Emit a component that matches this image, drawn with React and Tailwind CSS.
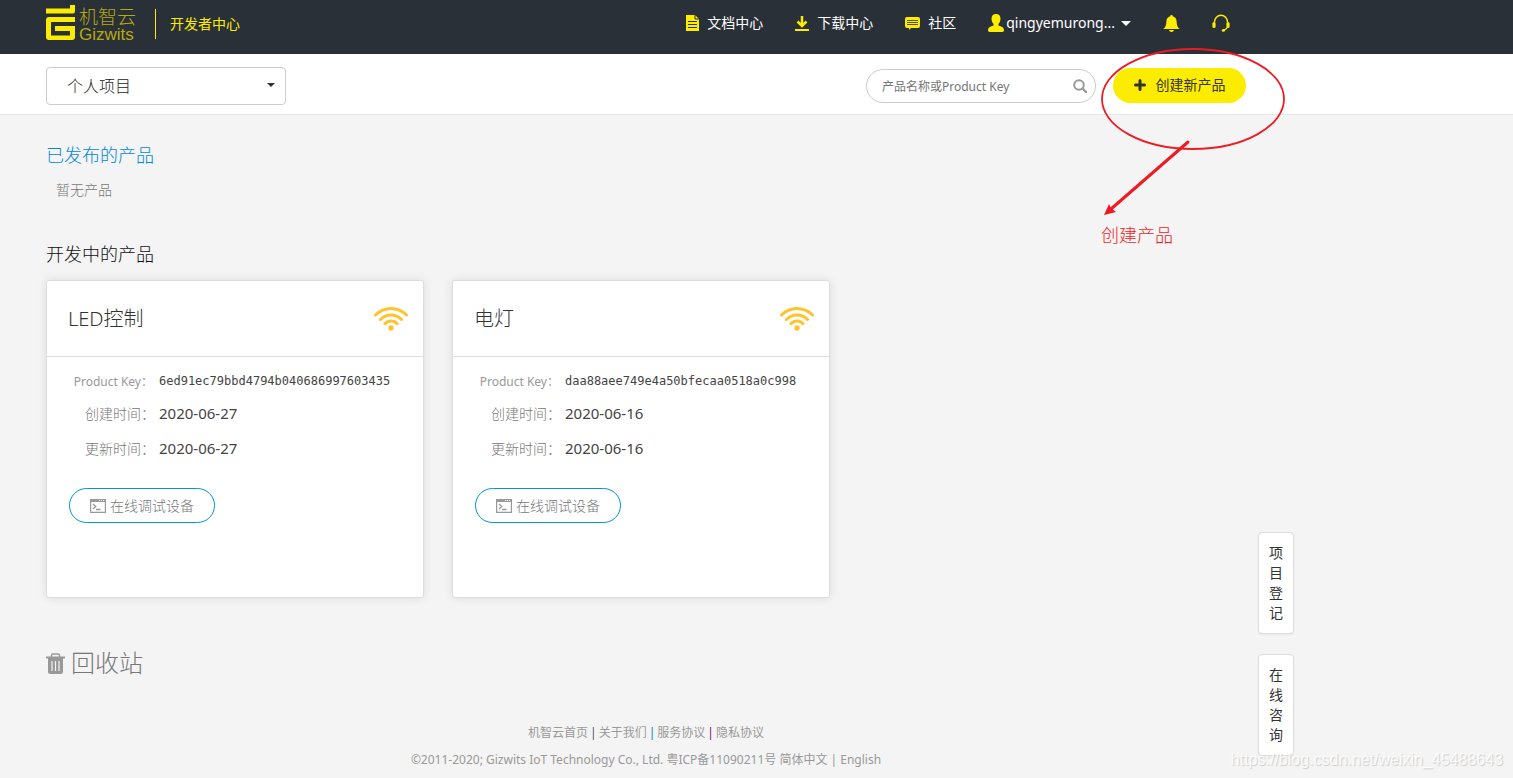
const products = [
  { name: 'LED控制', key: '6ed91ec79bbd4794b040686997603435', created: '2020-06-27', updated: '2020-06-27' },
  { name: '电灯', key: 'daa88aee749e4a50bfecaa0518a0c998', created: '2020-06-16', updated: '2020-06-16' },
];

function LogoMark() {
  return (
    <svg viewBox="0 0 29 35" className="h-[35px] w-[29px]" fill="#fcec00" aria-hidden="true">
      <path d="M0 3.500h24V0h5v6q0 2.500-2 2.500H0z" />
      <path d="M3 12h26v5H5v13.500h19V26H9v-5h20v11q0 3-3 3H3q-3 0-3-3V15q0-3 3-3z" />
    </svg>
  );
}

function DocIcon() {
  return (
    <svg viewBox="0 0 13 16" className="h-4 w-[13px]" aria-hidden="true">
      <path d="M0 0h9l4 4v12H0z" fill="#fcec00" />
      <path d="M9 0v4h4M2 6.500h9M2 9.500h9M2 12.500h9" stroke="#2a3038" fill="none" />
    </svg>
  );
}

function DownloadIcon() {
  return (
    <svg viewBox="0 0 14 15" className="h-[15px] w-[14px]" fill="none" stroke="#fcec00" strokeWidth="2" aria-hidden="true">
      <path d="M7 0v10M2.500 5.500L7 10l4.500-4.500" strokeWidth="2.500" />
      <path d="M0 14h14" />
    </svg>
  );
}

function ChatIcon() {
  return (
    <svg viewBox="0 0 15 13" className="h-[13px] w-[15px]" aria-hidden="true">
      <path d="M2 0h11q2 0 2 2v7q0 2-2 2H6l-2 2v-2H2q-2 0-2-2V2q0-2 2-2z" fill="#fcec00" />
      <path d="M2 3.500h11M2 5.500h11M2 7.500h11" stroke="#2a3038" strokeWidth=".8" />
    </svg>
  );
}

function UserIcon() {
  return (
    <svg viewBox="0 0 16 18" className="h-[18px] w-4" fill="#fcec00" aria-hidden="true">
      <path d="M8 0c3 0 4.500 2 4.500 4.700 0 2.200-.9 4-2 5.100v1.700c1 .7 5.500 1.200 5.500 4.500 0 1.500-1 2-2 2H2c-1 0-2-.5-2-2 0-3.300 4.500-3.800 5.500-4.500V9.800c-1.100-1.100-2-2.900-2-5.100C3.500 2 5 0 8 0z" />
    </svg>
  );
}

function BellIcon() {
  return (
    <svg viewBox="0 0 17 17" className="size-[17px]" fill="#fcec00" aria-hidden="true">
      <path d="M8.500 0c.8 0 1.200.5 1.200 1.200 2.500.6 3.800 2.500 3.900 5 .1 4 .9 6.300 3.200 7.800H.2c2.300-1.500 3.100-3.800 3.200-7.800.1-2.500 1.400-4.400 3.900-5C7.300.5 7.700 0 8.500 0zM6 15h5q-.5 2-2.500 2T6 15z" />
    </svg>
  );
}

function HeadsetIcon() {
  return (
    <svg viewBox="0 0 18 18" className="size-[18px]" fill="none" stroke="#fcec00" aria-hidden="true">
      <path d="M2.500 8.500V8a6.500 6.700 0 0 1 13 0v.5" strokeWidth="1.500" />
      <path d="M2 9.500v3M16 9.500v3" strokeWidth="3.200" strokeLinecap="round" />
      <path d="M15.500 13q-.8 2-3 2.800" strokeWidth="1.200" />
      <path d="M11 16.500l1-.3" strokeWidth="2.500" strokeLinecap="round" />
    </svg>
  );
}

function PlusIcon() {
  return (
    <svg viewBox="0 0 12 12" className="size-3" stroke="#333" strokeWidth="3" strokeLinecap="round" aria-hidden="true">
      <path d="M6 1.500v9M1.500 6h9" />
    </svg>
  );
}

function SearchIcon() {
  return (
    <svg viewBox="0 0 14 14" className="size-[14px]" fill="none" stroke="#999" strokeWidth="2" aria-hidden="true">
      <circle cx="6" cy="6" r="4.800" />
      <path d="M9.500 9.500l3.500 3.500" strokeWidth="2.400" strokeLinecap="round" />
    </svg>
  );
}

function WifiIcon() {
  return (
    <svg viewBox="0 0 34 24" className="h-6 w-[34px]" fill="none" stroke="#ffc32e" strokeWidth="3" strokeLinecap="round" aria-hidden="true">
      <path d="M1.500 8Q8 1.500 17 1.500T32.500 8M6.500 12.500Q11 8 17 8t10.500 4.500M11 16.700q2.500-2.700 6-2.700t6 2.700" />
      <circle cx="17" cy="21" r="2.700" fill="#ffc32e" stroke="none" />
    </svg>
  );
}

function TerminalIcon() {
  return (
    <svg viewBox="0 0 16 14" className="h-[14px] w-4" fill="none" stroke="#999" aria-hidden="true">
      <path d="M.6.600h14.800v12.800H.6z" strokeWidth="1.200" />
      <path d="M3 5l2.700 2.500L3 10M6 10.500h4.500" strokeWidth="1.300" />
      <path d="M0 1.500h16" strokeWidth="3" />
      <path d="M9 1.500h1M11 1.500h1M13 1.500h1" stroke="#fff" />
    </svg>
  );
}

function TrashIcon() {
  return (
    <svg viewBox="0 0 19 21" className="h-[21px] w-[19px]" aria-hidden="true">
      <path d="M5.500 4V2.500q0-1.500 1.500-1.500h5q1.500 0 1.500 1.500V4" fill="none" stroke="#999" strokeWidth="1.500" />
      <path d="M0 3.500h19v2H0zM2 5h15v13.500q0 2.500-2.500 2.500h-10Q2 21 2 18.500z" fill="#999" />
      <path d="M6 8v10M9.500 8v10M13 8v10" stroke="#f4f4f4" strokeWidth="1.200" />
    </svg>
  );
}

function NavBar() {
  return (
    <header className="bg-[#2a3038]">
      <div className="ml-[46px] flex h-[54px] max-w-[1200px] items-center justify-between">
        <div className="flex items-center pb-[6px]">
          <a href="#" className="flex gap-1">
            <LogoMark />
            <span className="flex flex-col text-[#b5ab0e]">
              <span className="pt-[3px] text-[19px] leading-[18px] font-light">机智云</span>
              <span className="font-['Liberation_Sans',sans-serif] text-[17px] leading-[17px]">Gizwits</span>
            </span>
          </a>
          <a href="#" className="ml-[19px] flex h-[30px] items-center border-l border-[#fcec00] pl-[14px] text-sm text-[#fcec00]">开发者中心</a>
        </div>
        <nav className="mr-4 flex items-center pb-2 text-sm text-white">
          <a href="#" className="flex items-center gap-2"><DocIcon />文档中心</a>
          <a href="#" className="ml-8 flex items-center gap-2"><DownloadIcon />下载中心</a>
          <a href="#" className="ml-8 flex items-center gap-2"><ChatIcon />社区</a>
          <button className="ml-8 flex items-center gap-0.5">
            <UserIcon />
            <span>qingyemurong...</span>
            <span className="ml-1 border-x-[5px] border-t-[5px] border-x-transparent border-t-white" />
          </button>
          <button className="ml-8" aria-label="消息"><BellIcon /></button>
          <button className="ml-8" aria-label="客服"><HeadsetIcon /></button>
        </nav>
      </div>
    </header>
  );
}

function Annotation() {
  return (
    <div className="pointer-events-none absolute -top-5 -left-3 w-[184px] text-[#ed1c24]">
      <svg viewBox="0 0 184 170" className="h-[170px] w-[184px]" fill="none" stroke="#ed1c24" aria-hidden="true">
        <ellipse cx="92" cy="51" rx="91" ry="50" strokeWidth="1.800" />
        <path d="M87 94L10 161" strokeWidth="3" strokeLinecap="round" />
        <path d="M3 167l5-11 2 4 5 4z" fill="#ed1c24" stroke="none" />
      </svg>
      <p className="mt-[3px] text-lg font-light">创建产品</p>
    </div>
  );
}

function ToolBar() {
  return (
    <div className="border-b border-[#e7e7e7] bg-white">
      <div className="ml-[46px] flex h-[60px] max-w-[1200px] items-center justify-between">
        <div className="relative mt-1">
          <select aria-label="项目" className="h-[38px] w-60 appearance-none rounded border border-[#ccc] bg-white pl-5 text-base font-light text-[#222]">
            <option>个人项目</option>
          </select>
          <span className="pointer-events-none absolute top-4 right-[11px] border-x-4 border-t-4 border-x-transparent border-t-[#333]" />
        </div>
        <div className="flex items-center">
          <div className="relative mt-1">
            <input
              type="text"
              aria-label="搜索产品"
              placeholder="产品名称或Product Key"
              className="h-[34px] w-[230px] rounded-full border border-[#ccc] pr-9 pl-[15px] text-xs placeholder:text-[#757575]"
            />
            <span className="absolute top-[10px] right-[9px]"><SearchIcon /></span>
          </div>
          <div className="relative mt-0.5 ml-[17px]">
            <button className="flex h-[35px] w-[133px] items-center justify-center gap-[10px] rounded-full bg-[#fcec00] text-sm text-[#333]">
              <PlusIcon />创建新产品
            </button>
            <Annotation />
          </div>
        </div>
      </div>
    </div>
  );
}

function ProductCard({ product }) {
  return (
    <article className="h-[318px] w-[378px] rounded-[3px] border border-[#ddd] bg-white shadow-[0_0_10px_rgba(0,0,0,0.1)]">
      <div className="flex h-[76px] items-center justify-between border-b border-[#ddd] pr-[15px] pl-[21px]">
        <h3 className="text-xl font-light text-[#333]">{product.name}</h3>
        <WifiIcon />
      </div>
      <dl className="grid grid-cols-[108px_1fr] gap-x-1 pt-[11px] text-sm leading-[35px] text-[#444]">
        <dt className="pr-0.5 text-right text-xs leading-7 text-[#999]">Product Key：</dt>
        <dd className="font-['DejaVu_Sans_Mono',monospace] text-xs leading-[26px]">{product.key}</dd>
        <dt className="text-right font-light text-[#777]">创建时间：</dt>
        <dd className="text-[15px]">{product.created}</dd>
        <dt className="text-right font-light text-[#777]">更新时间：</dt>
        <dd className="text-[15px]">{product.updated}</dd>
      </dl>
      <button className="mt-[22px] ml-[22px] flex h-[35px] w-[146px] items-center justify-center gap-1 rounded-full border border-[#0092e5] text-sm font-light text-[#777]">
        <TerminalIcon />在线调试设备
      </button>
    </article>
  );
}

function SideButton({ children }) {
  return (
    <button className="w-9 rounded border border-[#ddd] bg-white px-[10px] py-[10px] text-sm leading-5 text-[#333] shadow-xs">
      {children}
    </button>
  );
}

function Footer() {
  return (
    <footer className="mt-10 text-center text-xs leading-[27px] text-[#999]">
      <p className="flex justify-center gap-0.5">
        <a href="#">机智云首页</a>
        <span className="text-[#555]">|</span>
        <a href="#">关于我们</a>
        <span className="text-[#0082c5]">|</span>
        <a href="#">服务协议</a>
        <span className="text-[#800080]">|</span>
        <a href="#">隐私协议</a>
      </p>
      <p>
        ©2011-2020; Gizwits IoT Technology Co., Ltd. 粤ICP备11090211号 <a href="#">简体中文</a> | <a href="#">English</a>
      </p>
    </footer>
  );
}

export default function App() {
  return (
    <div className="relative min-h-screen bg-[#f4f4f4] font-['Noto_Sans','Noto_Sans_CJK_SC',sans-serif]">
      <NavBar />
      <ToolBar />
      <main className="relative ml-[46px] max-w-[1200px] pt-[26px]">
        <h2 className="text-lg font-light text-[#0088dd]">已发布的产品</h2>
        <p className="mt-[11px] ml-[10px] text-sm font-light text-[#777]">暂无产品</p>
        <h2 className="mt-10 text-lg font-light text-[#111]">开发中的产品</h2>
        <div className="mt-3 flex gap-7">
          {products.map((p) => (
            <ProductCard key={p.key} product={p} />
          ))}
        </div>
        <a href="#" className="mt-[49px] flex w-fit items-center gap-[6px] text-2xl font-light text-[#777]">
          <TrashIcon />回收站
        </a>
        <Footer />
        <div className="absolute bottom-[17px] left-full ml-3 flex flex-col gap-5">
          <SideButton>项目登记</SideButton>
          <SideButton>在线咨询</SideButton>
        </div>
      </main>
      <p className="absolute right-[10px] bottom-2 font-['Liberation_Sans',sans-serif] text-base leading-5 text-white/80 [text-shadow:1px_1px_1px_#ccc]">
        https://blog.csdn.net/weixin_45488643
      </p>
    </div>
  );
}
